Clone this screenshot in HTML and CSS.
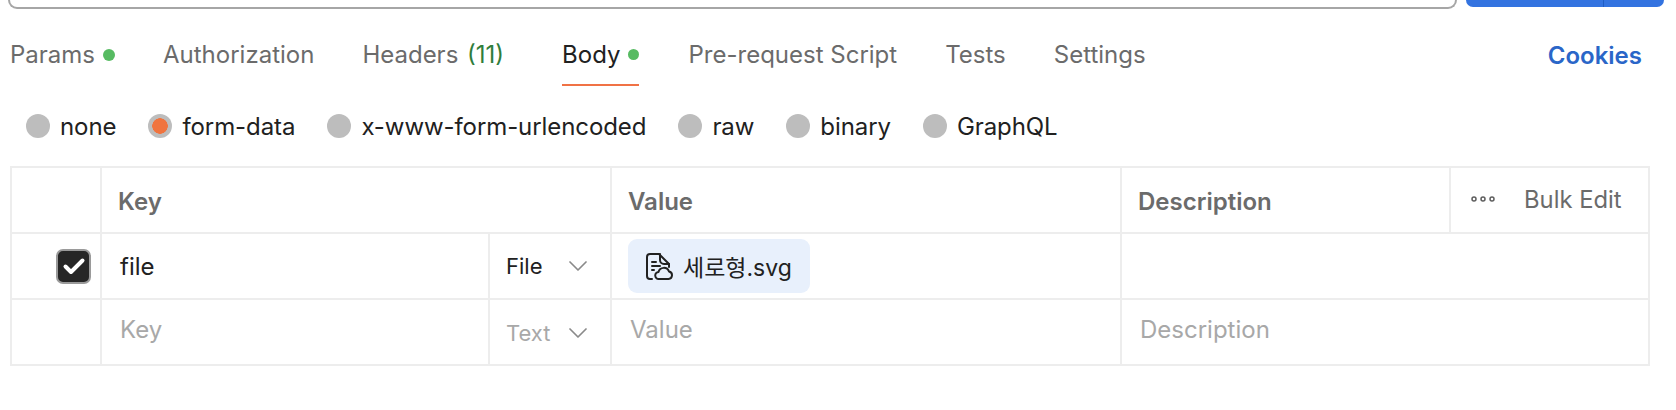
FILE: index.html
```html
<!DOCTYPE html>
<html lang="en">
<head>
<meta charset="utf-8">
<title>Request body</title>
<link rel="stylesheet" href="styles.css">
</head>
<body>
<div class="topbar">
  <div class="url-box"></div>
  <div class="send"><span class="send-split"></span></div>
</div>
<nav class="tabs">
  <a class="tab">Params<i class="dot"></i></a>
  <a class="tab">Authorization</a>
  <a class="tab tab-wide">Headers <span class="count">(11)</span></a>
  <a class="tab active">Body<i class="dot dot-body"></i></a>
  <a class="tab">Pre-request Script</a>
  <a class="tab">Tests</a>
  <a class="tab">Settings</a>
  <a class="cookies">Cookies</a>
</nav>
<div class="modes">
  <label class="mode"><i class="radio"></i>none</label>
  <label class="mode"><i class="radio on"></i>form-data</label>
  <label class="mode"><i class="radio"></i>x-www-form-urlencoded</label>
  <label class="mode"><i class="radio"></i>raw</label>
  <label class="mode"><i class="radio"></i>binary</label>
  <label class="mode"><i class="radio"></i>GraphQL</label>
</div>
<div class="grid">
  <div class="cell"></div>
  <div class="cell head span2">Key</div>
  <div class="cell head">Value</div>
  <div class="cell head">Description</div>
  <div class="cell bulk">
    <svg class="dots" width="24" height="6" viewBox="0 0 24 6"><circle cx="3" cy="3" r="2"/><circle cx="12" cy="3" r="2"/><circle cx="21" cy="3" r="2"/></svg>
    <span>Bulk Edit</span>
  </div>

  <div class="cell check-cell">
    <span class="check"><svg width="24" height="20" viewBox="0 0 24 20"><path d="M3.500 10.500l5.500 5.500L20.500 4.500"/></svg></span>
  </div>
  <div class="cell key">file</div>
  <div class="cell type">File<svg class="chev" width="18" height="10" viewBox="0 0 18 10"><path d="M1 1l8 8 8-8"/></svg></div>
  <div class="cell value-cell">
    <span class="file-chip">
      <svg class="file-icon" width="27" height="27" viewBox="0 0 27 27"><path d="M6 26H4a3 3 0 0 1-3-3V4a3 3 0 0 1 3-3h9l10 10v3"/><path d="M14 1v6a4 4 0 0 0 4 4h5"/><path d="M6 9h4M6 13h8M6 17h2"/><path d="M13 26a3.500 3.500 0 0 1-.5-7 5.500 5.500 0 0 1 10.500-.5A3.800 3.800 0 0 1 22.500 26z"/></svg>
      <span>세로형.svg</span>
    </span>
  </div>
  <div class="cell span2"></div>

  <div class="cell"></div>
  <div class="cell ph key-ph">Key</div>
  <div class="cell type ph type-ph">Text<svg class="chev" width="18" height="10" viewBox="0 0 18 10"><path d="M1 1l8 8 8-8"/></svg></div>
  <div class="cell ph val-ph">Value</div>
  <div class="cell ph val-ph span2">Description</div>
</div>
</body>
</html>
```
FILE: styles.css
```css
* { box-sizing: border-box; }
html, body { margin: 0; padding: 0; background: #fff; }
body { width: 1676px; height: 410px; overflow: hidden; font-family: Inter, "Noto Sans CJK KR", sans-serif; font-size: 24px; color: #212121; }

.topbar { display: flex; height: 10px; padding-left: 8px; }
.url-box { width: 1449px; height: 9px; border: 2px solid #a6a6a6; border-top: 0; border-radius: 0 0 9px 9px; }
.send { width: 198px; height: 7px; margin-left: 9px; background: #3373e0; border-radius: 0 0 7px 7px; position: relative; }
.send-split { position: absolute; left: 137px; top: 0; width: 1px; height: 7px; background: #1f5dc4; }

.tabs { display: flex; align-items: flex-start; height: 76px; padding: 31px 0 0 10px; }
.tab { position: relative; display: flex; align-items: center; height: 27px; margin-right: 48px; color: #6b6b6b; white-space: pre; }
.tab-wide { margin-right: 58px; }
.tab.active { color: #212121; margin-right: 50px; }
.tab.active::after { content: ""; position: absolute; left: 0; right: 0; top: 43px; height: 2px; background: #f07245; }
.count { margin-left: 2px; color: #2f7d3b; }
.dot { width: 12px; height: 12px; margin-left: 8px; border-radius: 50%; background: #57bb62; }
.dot-body { width: 11px; height: 11px; margin-left: 7px; }
.cookies { margin-left: auto; margin-right: 34px; color: #2a66c8; font-weight: 600; }

.modes { display: flex; gap: 32px; padding-left: 26px; height: 80px; padding-top: 24px; align-items: flex-start; letter-spacing: -.08px; }
.mode { display: flex; align-items: center; gap: 10px; height: 32px; white-space: nowrap; }
.radio { width: 24px; height: 24px; border-radius: 50%; background: #bdbdbd; }
.radio.on { background: radial-gradient(circle, #f0743f 0 7.500px, #bdbdbd 8px); }

.grid { display: grid; grid-template-columns: 90px 388px 122px 510px 329px 199px; grid-auto-rows: 66px; width: 1640px; margin-left: 10px; border-top: 2px solid #ededed; border-left: 2px solid #ededed; }
.cell { display: flex; align-items: center; border-right: 2px solid #ededed; border-bottom: 2px solid #ededed; padding-left: 16px; min-width: 0; }
.span2 { grid-column: span 2; }
.head { font-weight: 600; color: #6b6b6b; padding-top: 2px; }
.bulk { color: #6b6b6b; padding-left: 20px; gap: 29px; padding-bottom: 2px; font-size: 23.800px; }
.dots { fill: none; stroke: #5e5e5e; stroke-width: 1.500; }
.check-cell { justify-content: flex-end; padding: 0 9px 0 0; }
.check { display: flex; align-items: center; justify-content: center; width: 35px; height: 35px; background: #262626; border: 2px solid #9a9a9a; border-radius: 7px; }
.check svg { fill: none; stroke: #fff; stroke-width: 4; stroke-linecap: round; stroke-linejoin: round; }
.key { padding-left: 18px; }
.ph { color: #a8a8a8; }
.key-ph { padding-left: 18px; padding-bottom: 6px; }
.val-ph { padding-left: 18px; padding-bottom: 6px; }
.type { padding-left: 16px; font-size: 22px; padding-right: 23px; justify-content: space-between; }
.type-ph { padding-top: 2px; }
.chev { fill: none; stroke: #8a8a8a; stroke-width: 1.700; stroke-linecap: round; stroke-linejoin: round; }
.file-chip { display: inline-flex; align-items: center; gap: 10px; height: 54px; padding: 0 18px; background: #e8f0fc; border-radius: 9px; white-space: nowrap; font-size: 23px; }
.file-icon { fill: none; stroke: #212121; stroke-width: 2; stroke-linecap: round; stroke-linejoin: round; }
```
